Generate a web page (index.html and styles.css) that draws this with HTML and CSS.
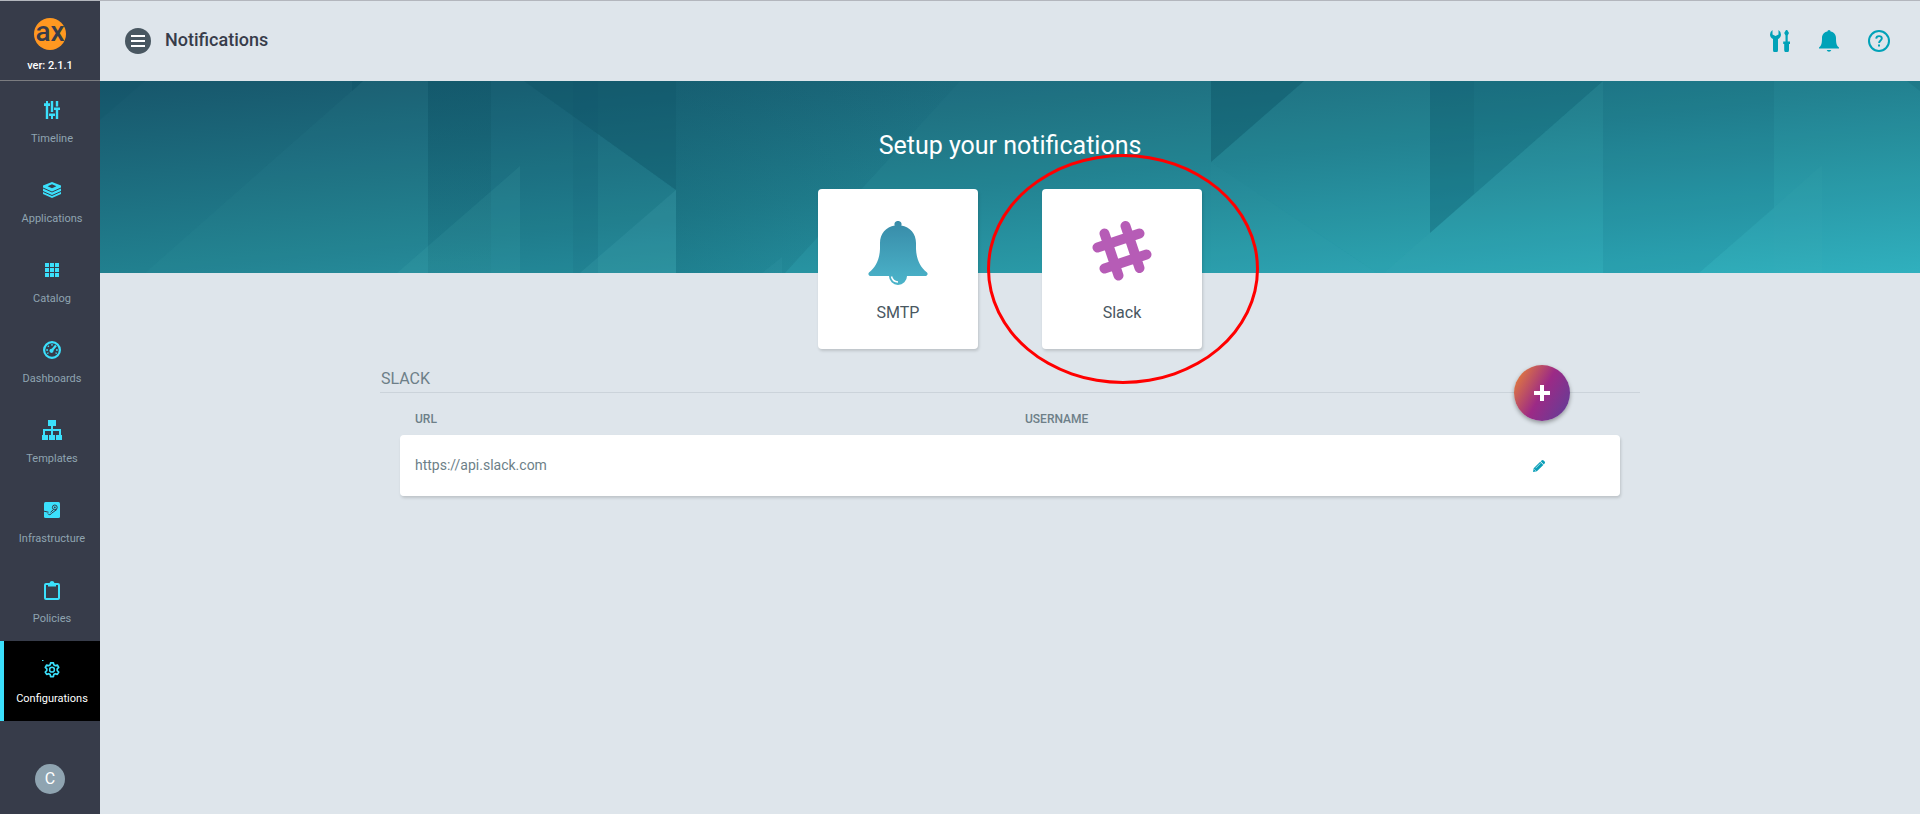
FILE: index.html
```html
<!DOCTYPE html>
<html lang="en">
<head>
<meta charset="utf-8">
<title>Notifications</title>
<link rel="stylesheet" href="styles.css">
</head>
<body>
<div class="app">
  <aside class="sidebar">
    <div class="brand">
      <div class="logo">ax</div>
      <div class="version">ver: 2.1.1</div>
    </div>
    <nav class="nav">
      <a class="nav-item" href="#timeline">
        <span class="nav-icon"><svg width="16" height="18" viewBox="0 0 16 18" fill="currentColor"><path d="M2 0h2v2.300h2v2.700H4.200v13H1.800V5H0V2.300h2zM6.800 0h2.400v11H6.800zM5 12.500h6V15H9v3H7v-3H5zM11.800 0h2.400v5.500h-2.400zM10 6.500h6V9h-1.800v9h-2.400V9H10z"/></svg></span>
        <span>Timeline</span>
      </a>
      <a class="nav-item" href="#applications">
        <span class="nav-icon"><svg width="18" height="16" viewBox="0 0 18 16"><path fill="currentColor" fill-rule="evenodd" d="M9 0l9 3.500v8.500l-9 4-9-4V3.500zM9 2.300L4.600 4.200 9 6.200l4.400-2z"/><path d="M0 6l9 4 9-4M0 9.500l9 4 9-4" fill="none" stroke="#373c4a" stroke-width="1"/></svg></span>
        <span>Applications</span>
      </a>
      <a class="nav-item" href="#catalog">
        <span class="nav-icon"><svg width="14" height="14" viewBox="0 0 14 14" fill="currentColor"><path d="M0 0h4v4H0zM5 0h4v4H5zM10 0h4v4h-4zM0 5h4v4H0zM5 5h4v4H5zM10 5h4v4h-4zM0 10h4v4H0zM5 10h4v4H5zM10 10h4v4h-4z"/></svg></span>
        <span>Catalog</span>
      </a>
      <a class="nav-item" href="#dashboards">
        <span class="nav-icon"><svg width="18" height="18" viewBox="0 0 18 18"><circle cx="9" cy="9" r="7.900" fill="none" stroke="currentColor" stroke-width="2.200"/><circle cx="8.500" cy="9.800" r="2.100" fill="currentColor"/><path d="M8.500 9.800L13 4.500" stroke="currentColor" stroke-width="2.200"/><path d="M9 3v1.800M4.800 4.800l1 1M3.200 9H5M13 9h1.800M4.200 12.500l1.300-.7M13.800 12.500l-1.300-.7" stroke="currentColor" stroke-width="1.300"/></svg></span>
        <span>Dashboards</span>
      </a>
      <a class="nav-item" href="#templates">
        <span class="nav-icon"><svg width="20" height="20" viewBox="0 0 20 20" fill="currentColor"><path d="M6 0h8v6h-3v3h8v6h1v5h-6v-5h3v-4h-6v4h2v5H7v-5h2v-4H3v4h3v5H0v-5h1V9h8V6H6z"/></svg></span>
        <span>Templates</span>
      </a>
      <a class="nav-item" href="#infrastructure">
        <span class="nav-icon"><svg width="16" height="16" viewBox="0 0 16 16"><rect width="16" height="16" rx="1.500" fill="currentColor"/><circle cx="10.800" cy="5.400" r="2.400" fill="none" stroke="#373c4a" stroke-width="1"/><circle cx="10.800" cy="5.400" r=".9" fill="#373c4a"/><path d="M0 9.200l4.500 1M9 8L6.500 10.300M12.800 7.500L7.500 11.300a2 2 0 0 1-3.700.2" fill="none" stroke="#373c4a"/></svg></span>
        <span>Infrastructure</span>
      </a>
      <a class="nav-item" href="#policies">
        <span class="nav-icon"><svg width="16" height="19" viewBox="0 0 16 19" fill="currentColor"><path fill-rule="evenodd" d="M2 2h3.500a2.600 2.600 0 0 1 5 0H14a2 2 0 0 1 2 2v13a2 2 0 0 1-2 2H2a2 2 0 0 1-2-2V4a2 2 0 0 1 2-2zM2 4v13h12V4h-2v1.500H4V4z"/></svg></span>
        <span>Policies</span>
      </a>
      <a class="nav-item nav-item-active" href="#configurations">
        <span class="nav-icon"><svg width="20" height="20" viewBox="0 0 20 20" fill="none" stroke="currentColor" stroke-linejoin="round"><path stroke-width="1.700" d="M8.600 2.800h2.800l.4 2 1.500.9 2-.7 1.400 2.400-1.500 1.400v1.800l1.500 1.400-1.400 2.400-2-.7-1.500.9-.4 2H8.600l-.4-2-1.500-.9-2 .7L3.300 12l1.500-1.400V8.800L3.300 7.400 4.700 5l2 .7 1.500-.9z"/><circle cx="10" cy="9.700" r="2.400" stroke-width="1.500"/><path d="M0 .5h1.500" stroke-width="1"/></svg></span>
        <span>Configurations</span>
      </a>
    </nav>
    <button class="avatar" type="button" aria-label="Account">C</button>
  </aside>

  <main class="main">
    <header class="topbar">
      <button class="menu-button" type="button" aria-label="Toggle menu"><svg width="14" height="12" viewBox="0 0 14 12" fill="currentColor"><path d="M0 0h14v2H0zM0 5h14v2H0zM0 10h14v2H0z"/></svg></button>
      <h1 class="page-title">Notifications</h1>
      <div class="tools">
        <a class="tool" href="#settings" aria-label="Settings"><svg width="20" height="22" viewBox="0 0 20 22" fill="currentColor"><path d="M2.500 0v4.500L5.500 6l3-1.500V0A5.500 5.500 0 0 1 11 4.500c0 2-1.200 3.700-3 4.600V20a2.500 2.500 0 0 1-5 0V9.100C1.200 8.200 0 6.500 0 4.500A5.500 5.500 0 0 1 2.500 0z"/><path d="M16 0h1.200L19 3l-1.300 2.500v6H20V14h-1v6a2.300 2.300 0 0 1-4.800 0v-6h-1v-2.500h2.300v-6L14.200 3z"/></svg></a>
        <a class="tool" href="#alerts" aria-label="Alerts"><svg width="20" height="22" viewBox="0 0 20 22" fill="currentColor"><path d="M10 0a1.600 1.600 0 0 1 1.600 1.600C15 2.200 17 5 17 8c0 5 .5 7.500 3 9.500v1H0v-1C2.500 15.500 3 13 3 8c0-3 2-5.800 5.400-6.400A1.600 1.600 0 0 1 10 0zM7.700 20h4.600a2.400 2.400 0 0 1-4.600 0z"/></svg></a>
        <a class="tool" href="#help" aria-label="Help"><svg width="22" height="22" viewBox="0 0 22 22" fill="none" stroke="currentColor"><circle cx="11" cy="11" r="10" stroke-width="2"/><path d="M8.200 8.600C8.300 6.900 9.400 6.100 11 6.100c1.700 0 2.800.9 2.800 2.300 0 2-2.700 2.100-2.700 4.600" stroke-width="1.900"/><path d="M11 14.500v2" stroke-width="2"/></svg></a>
      </div>
    </header>

    <section class="hero">
      <svg class="hero-art" viewBox="0 0 1820 192" preserveAspectRatio="none" aria-hidden="true">
        <defs>
          <linearGradient id="fade-right" x1="0" y1="0" x2="1" y2="0"><stop offset="0" stop-color="#0b5062" stop-opacity=".24"/><stop offset="1" stop-color="#0b5062" stop-opacity="0"/></linearGradient>
          <linearGradient id="fade-down" x1="0" y1="0" x2="0" y2="1"><stop offset="0" stop-color="#0b5062" stop-opacity=".36"/><stop offset="1" stop-color="#0b5062" stop-opacity=".12"/></linearGradient>
        </defs>
        <path fill="url(#fade-right)" d="M576 0h284L685 192H576z"/>
        <path fill="url(#fade-down)" d="M328 0h63v192h-63z"/>
        <g fill="#0b5062">
          <path opacity=".16" d="M0 0h45L0 39z"/>
          <path opacity=".3" d="M252 0h11l-11 10z"/>
          <path opacity=".08" d="M391 0h33l152 109v83H391z"/>
          <path opacity=".38" d="M424 0h152v109z"/>
          <path opacity=".08" d="M473 0h25v192h-25z"/>
          <path opacity=".36" d="M1111 0h93l-93 81z"/>
          <path opacity=".22" d="M1330 0h173l-173 152z"/>
          <path opacity=".1" d="M1330 0h44v113l-44 39z"/>
          <path opacity=".08" d="M1503 0h171v127l-75 65h-96z"/>
          <path opacity=".16" d="M1807 0h13v10z"/>
        </g>
        <g fill="#5cc0c8">
          <path opacity=".04" d="M263 0h65v192H45z"/>
          <path opacity=".1" d="M420 85v107H297z"/>
          <path opacity=".13" d="M576 109v83h-96z"/>
          <path opacity=".04" d="M498 53l78 56v83h-78z"/>
          <path opacity=".08" d="M682 176v16h-20z"/>
          <path opacity=".03" d="M860 0h251v192H685z"/>
          <path opacity=".03" d="M1204 0h126v192h-53L1111 81z"/>
          <path opacity=".04" d="M1111 81l166 111h-166z"/>
          <path opacity=".05" d="M1503 0v192h-219z"/>
          <path opacity=".02" d="M1674 0h146v192h-146z"/>
          <path opacity=".05" d="M1722 84v108h-123z"/>
        </g>
      </svg>
      <h2 class="hero-title">Setup your notifications</h2>
    </section>

    <div class="cards">
      <button class="card" type="button">
        <svg class="card-icon" width="64" height="64" viewBox="0 0 64 64"><defs><linearGradient id="bell" x1="0" y1="0" x2="0" y2="1"><stop offset="0" stop-color="#388ba8"/><stop offset="1" stop-color="#4bb4ca"/></linearGradient></defs><path fill="url(#bell)" d="M32 0a3.200 3.200 0 0 1 3.200 4.600C44 6 50 13 50 22v6c.4 10 4 18 11 23.500 1.500 1.800 0 3.500-2 3.500H41a9 9 0 0 1-18 0H5c-2 0-3.500-1.700-2-3.500C10 46 13.600 38 14 28v-6C14 13 20 6 28.800 4.600A3.200 3.200 0 0 1 32 0z"/><path d="M25.500 55.500a7 7 0 0 0 6.500 5.500" fill="none" stroke="#fff" stroke-width="1.500"/></svg>
        <span>SMTP</span>
      </button>
      <div class="card-wrap">
        <button class="card" type="button">
          <svg class="card-icon" width="64" height="64" viewBox="0 0 64 64" fill="none" stroke="#b65cb6" stroke-width="10" stroke-linecap="round"><path d="M14.500 12.500l14 42M35.500 5l14 42M7.500 26.500l42-14M14.500 47.500l42-14"/></svg>
          <span>Slack</span>
        </button>
        <div class="highlight"></div>
      </div>
    </div>

    <section class="panel">
      <div class="panel-head">
        <h3 class="panel-title">SLACK</h3>
        <button class="add-button" type="button" aria-label="Add"><svg width="16" height="16" viewBox="0 0 16 16" fill="currentColor"><path d="M6 0h4v6h6v4h-6v6H6v-6H0V6h6z"/></svg></button>
      </div>
      <table class="table">
        <thead>
          <tr><th class="col-url">URL</th><th class="col-user">USERNAME</th><th class="col-action"></th></tr>
        </thead>
        <tbody>
          <tr>
            <td>https://api.slack.com</td>
            <td></td>
            <td><button class="edit-button" type="button" aria-label="Edit"><svg width="12" height="12" viewBox="0 0 12 12"><path fill="currentColor" d="M8.600.5a1.500 1.500 0 0 1 2 0l1 1a1.500 1.500 0 0 1 0 2L10.800 4.400 7.700 1.300zM7.200 1.800l3.100 3.100-6.400 6.400L0 12l.7-3.800z"/><path d="M2.600 8.200l4.800-4.800M1.300 9.300l1.500 1.500" stroke="#fff" stroke-width=".6"/></svg></button></td>
          </tr>
        </tbody>
      </table>
    </section>
  </main>
</div>
</body>
</html>
```

FILE: styles.css
```css
* {
  box-sizing: border-box;
}

body {
  margin: 0;
  background: #dee5eb;
  color: #6d7f88;
  font-family: Roboto, "Liberation Sans", sans-serif;
  font-size: 14px;
}

button {
  padding: 0;
  border: 0;
  font: inherit;
  cursor: pointer;
}

svg {
  display: block;
}

.app {
  display: flex;
  min-height: 100vh;
  border-top: 1px solid #b3b6bd;
}

.sidebar {
  display: flex;
  flex-direction: column;
  flex: none;
  width: 100px;
  background: #373c4a;
}

.brand {
  display: flex;
  flex-direction: column;
  align-items: center;
  gap: 8px;
  height: 80px;
  padding-top: 17px;
  border-bottom: 1px solid #7b7c80;
  color: #fff;
}

.logo {
  width: 32px;
  height: 32px;
  border-radius: 50%;
  background: #ff9820;
  color: #373c4a;
  font-size: 28px;
  font-weight: 500;
  line-height: 28px;
  text-align: center;
}

.version {
  font-size: 11px;
  font-weight: 500;
  line-height: 16px;
}

.nav-item {
  display: flex;
  flex-direction: column;
  align-items: center;
  gap: 11px;
  height: 80px;
  padding-top: 19px;
  border-left: 4px solid transparent;
  color: #8fa4b1;
  font-size: 11px;
  line-height: 16px;
  text-decoration: none;
}

.nav-icon {
  display: flex;
  align-items: center;
  height: 20px;
  color: #3be0fc;
}

.nav-item-active {
  border-left-color: #3be0fc;
  background: #000;
  color: #fff;
}

.avatar {
  width: 30px;
  height: 30px;
  margin: auto auto 20px;
  border-radius: 50%;
  background: #8fa4b1;
  color: #fff;
  font-size: 16px;
  line-height: 28px;
}

.main {
  flex: 1;
  min-width: 0;
}

.topbar {
  display: flex;
  align-items: center;
  height: 80px;
  padding: 0 30px 0 25px;
}

.menu-button {
  display: grid;
  place-items: center;
  width: 26px;
  height: 26px;
  border-radius: 50%;
  background: #495761;
  color: #fff;
}

.page-title {
  margin: 0 0 2px 14px;
  color: #373c4a;
  font-size: 18px;
  font-weight: 500;
  line-height: 24px;
}

.tools {
  display: flex;
  gap: 29px;
  margin-left: auto;
}

.tool {
  color: #00a2b8;
}

.hero {
  display: grid;
  height: 192px;
  background: linear-gradient(to bottom right, #17566b, #21808f 50%, #2fb0be);
}

.hero-art {
  grid-area: 1 / 1;
  width: 100%;
  height: 192px;
}

.hero-title {
  grid-area: 1 / 1;
  margin: 49px 0 0;
  color: #fff;
  font-size: 25px;
  font-weight: 400;
  line-height: 32px;
  text-align: center;
  z-index: 1;
}

.cards {
  display: flex;
  justify-content: center;
  gap: 64px;
  margin-top: -84px;
}

.card-wrap {
  position: relative;
}

.card {
  display: flex;
  flex-direction: column;
  align-items: center;
  gap: 18px;
  position: relative;
  width: 160px;
  height: 160px;
  padding-top: 32px;
  border-radius: 4px;
  background: #fff;
  box-shadow: 1px 2px 3px rgba(0, 0, 0, 0.15);
  color: #495761;
  font-size: 16px;
  line-height: 20px;
}

.highlight {
  position: absolute;
  top: -35px;
  left: -55px;
  width: 272px;
  height: 230px;
  border: 3px solid #f00;
  border-radius: 50%;
  pointer-events: none;
}

.panel {
  max-width: 1260px;
  margin: 0 auto;
}

.panel-head {
  position: relative;
  margin-top: 16px;
  padding: 2px 1px 1px;
  border-bottom: 1px solid #cbd3da;
}

.panel-title {
  margin: 0;
  font-size: 16px;
  font-weight: 400;
  line-height: 24px;
}

.add-button {
  display: grid;
  place-items: center;
  position: absolute;
  top: 0;
  right: 70px;
  width: 56px;
  height: 56px;
  border-radius: 50%;
  background: linear-gradient(120deg, #f08b2e, #9c2a86 50%, #5b4099);
  box-shadow: 0 2px 4px rgba(0, 0, 0, 0.35);
  color: #fff;
}

.table {
  width: calc(100% - 40px);
  margin: 0 20px;
  border-spacing: 0;
  table-layout: fixed;
}

.table th {
  height: 42px;
  padding: 10px 15px 0;
  font-size: 12px;
  font-weight: 500;
  text-align: left;
}

.table tbody tr {
  border-radius: 4px;
  box-shadow: 1px 2px 3px rgba(0, 0, 0, 0.15);
}

.table td {
  height: 61px;
  padding: 0 15px 2px;
  background: #fff;
}

.table td:first-child {
  border-radius: 4px 0 0 4px;
}

.table td:last-child {
  padding-bottom: 0;
  border-radius: 0 4px 4px 0;
}

.col-url {
  width: 50%;
}

.col-action {
  width: 102px;
}

.edit-button {
  display: block;
  background: none;
  color: #0b9fb8;
}
```
